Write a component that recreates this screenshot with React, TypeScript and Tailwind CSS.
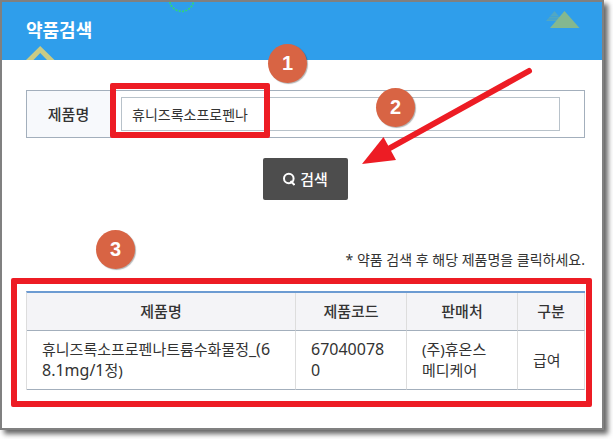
import { useState } from "react";

const products = [
  {
    name: ["휴니즈록소프로펜나트륨수화물정", "_(6", "8.1mg/1", "정)"],
    code: "670400780",
    seller: ["(주)휴온스", "메디케어"],
    kind: "급여",
  },
];

function Badge({ label, place }: { label: string; place: string }) {
  return (
    <span
      className={`absolute z-20 flex size-[39px] items-center justify-center rounded-full bg-[#d86444] pb-[2px] font-['Liberation_Sans',sans-serif] text-[20px] font-bold text-white shadow-[1px_1px_1px_rgba(0,0,0,0.3)] ${place}`}
    >
      {label}
    </span>
  );
}

function Header() {
  return (
    <header className="relative h-[58px] overflow-hidden bg-[#2f9eeb] px-6 pt-[14px]">
      <h1 className="text-[18px] leading-7 font-bold text-white">약품검색</h1>
      <svg className="absolute left-6 top-[44px]" width="29" height="14" viewBox="0 0 29 14" aria-hidden="true">
        <path d="M0 14 14.2 0 28.5 14H21L14.2 7 7.5 14Z" fill="#c9cb85" />
      </svg>
      <svg className="absolute left-[167px] top-0" width="26" height="12" viewBox="0 0 26 12" aria-hidden="true">
        <path d="M.8 0A12.200 12.200 0 0 0 24.500 0" fill="none" stroke="#32d47b" strokeWidth="1.8" strokeDasharray="2 1.3" />
      </svg>
      <svg className="absolute right-[22px] top-[8px]" width="35" height="18" viewBox="0 0 35 18" aria-hidden="true">
        <path d="M1 11 9.5 1 18 11Z" fill="#51a7c3" />
        <path d="M4.500 6.500H15M2.500 9H17" stroke="#3ba2d9" strokeWidth=".7" />
        <path d="M5 18 19.500 1 34.500 18Z" fill="#84b88f" />
      </svg>
    </header>
  );
}

export default function App() {
  const [query, setQuery] = useState("휴니즈록소프로펜나");
  return (
    <div className="bg-white pr-[9px] pb-[9px] font-['Noto_Sans','Noto_Sans_CJK_KR',sans-serif] text-[#333]">
      <div className="relative border-2 border-[#808080] bg-white shadow-[4px_4px_5px_rgba(0,0,0,0.6)]">
        <Header />
        <main className="pt-[30px] pr-[17px] pb-[38px] pl-6">
          <form onSubmit={(e) => e.preventDefault()} className="relative">
            <div className="relative flex h-12 border border-[#a3afbc]">
              <label
                htmlFor="product"
                className="flex w-[84px] shrink-0 items-center justify-center border-r border-[#ddd] bg-[#f7f9fc] text-[15px] font-medium"
              >
                제품명
              </label>
              <div className="flex flex-1 items-center pr-6 pl-[10px]">
                <input
                  id="product"
                  type="text"
                  value={query}
                  onChange={(e) => setQuery(e.target.value)}
                  className="h-[34px] w-full border border-[#b8c2ca] bg-white px-[10px] text-[14px] outline-none"
                />
              </div>
            </div>
            <div className="pointer-events-none absolute top-[-7px] left-[84px] h-[55px] w-[160px] rounded-[2px] border-6 border-[#ed1c24]" />
            <Badge label="1" place="top-[-46px] left-[242px]" />
            <Badge label="2" place="top-[-2px] left-[350px]" />
            <svg
              className="pointer-events-none absolute top-[-24px] right-[51px] z-10"
              width="174"
              height="100"
              viewBox="0 0 174 100"
              aria-hidden="true"
            >
              <path d="M169 5 30 82" stroke="#ed1c24" strokeWidth="6" strokeLinecap="round" />
              <path d="M2 98 23.500 71 36 94Z" fill="#ed1c24" />
            </svg>
            <div className="mt-5 flex justify-center">
              <button
                type="submit"
                className="flex h-[42px] w-[85px] items-center justify-center gap-[5px] rounded-[2px] bg-[#4d4d4d] text-[15px] font-medium text-white"
              >
                <svg width="12" height="14" viewBox="0 0 12 14" fill="none" stroke="currentColor" strokeWidth="2" aria-hidden="true">
                  <circle cx="5.800" cy="6.500" r="4.800" />
                  <path d="M7.500 9 11.500 13" />
                </svg>
                검색
              </button>
            </div>
          </form>

          <p className="mt-[50px] text-right text-[14px] leading-5">* 약품 검색 후 해당 제품명을 클릭하세요.</p>

          <section className="relative mt-[21px]">
            <Badge label="3" place="top-[-61px] left-[70px]" />
            <table className="w-full table-fixed border-separate border-spacing-0 border-t-2 border-l border-t-[#6c9bd2] border-l-[#ddd] text-[15px]">
              <colgroup>
                <col />
                <col className="w-[111px]" />
                <col className="w-[111px]" />
                <col className="w-[67px]" />
              </colgroup>
              <thead>
                <tr className="h-[38px] bg-[#f4f4f7]">
                  {["제품명", "제품코드", "판매처", "구분"].map((title) => (
                    <th key={title} scope="col" className="border-r border-b border-r-[#ddd] border-b-[#a3afbc] p-0 font-medium">
                      {title}
                    </th>
                  ))}
                </tr>
              </thead>
              <tbody>
                {products.map((p) => (
                  <tr key={p.code} className="h-[59px] leading-[21px] [&>td]:border-r [&>td]:border-b [&>td]:border-r-[#ddd] [&>td]:border-b-[#a3afbc] [&>td]:px-[15px]">
                    <td className="break-all">
                      <a href="#product">
                        {p.name[0]}
                        <span className="text-[16px]">
                          {p.name[1]}
                          {p.name[2]}
                        </span>
                        {p.name[3]}
                      </a>
                    </td>
                    <td className="text-[16px] break-all">{p.code}</td>
                    <td className="break-keep">
                      {p.seller[0]}
                      <wbr />
                      {p.seller[1]}
                    </td>
                    <td>{p.kind}</td>
                  </tr>
                ))}
              </tbody>
            </table>
            <div className="pointer-events-none absolute top-[-13px] right-[-7px] bottom-[-17px] left-[-15px] rounded-[2px] border-6 border-[#ed1c24]" />
          </section>
        </main>
      </div>
    </div>
  );
}
